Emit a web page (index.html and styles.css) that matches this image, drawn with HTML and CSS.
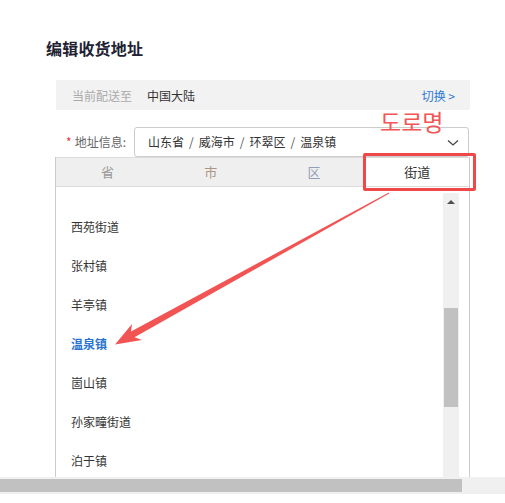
FILE: index.html
```html
<!DOCTYPE html>
<html>
<head>
    <meta charset="utf-8">
    <link rel="stylesheet" href="styles.css">
</head>
<body>
    <div class="viewport">
        <h1 class="title">编辑收货地址</h1>

        <!-- Delivery region bar -->
        <div class="ship-bar">
            <span class="ship-label">当前配送至</span>
            <span class="ship-value">中国大陆</span>
            <a class="ship-switch" href="#">切换 &gt;</a>
        </div>

        <!-- Address picker -->
        <div class="addr-row">
            <label class="addr-label"><span class="star">*</span>地址信息:</label>
            <div class="addr-select">
                <span>山东省</span><span class="sep">/</span><span>威海市</span><span class="sep">/</span><span>环翠区</span><span class="sep">/</span><span>温泉镇</span>
                <svg class="chevron" width="12" height="8" viewBox="0 0 12 8">
                    <polyline points="1,1.5 6,6 11,1.5" fill="none" stroke="#444" stroke-width="1.3"/>
                </svg>
            </div>

            <div class="dropdown">
                <div class="tabs">
                    <div class="tab tab-prov">省</div>
                    <div class="tab tab-city">市</div>
                    <div class="tab tab-dist">区</div>
                    <div class="tab active">街道</div>
                </div>
                <div class="dd-body">
                    <ul class="dd-list">
                        <li>西苑街道</li>
                        <li>张村镇</li>
                        <li>羊亭镇</li>
                        <li class="selected">温泉镇</li>
                        <li>崮山镇</li>
                        <li>孙家疃街道</li>
                        <li>泊于镇</li>
                    </ul>
                    <div class="vscroll">
                        <div class="vscroll-btn"><span class="tri-up"></span></div>
                        <div class="vscroll-thumb"></div>
                    </div>
                </div>
            </div>
        </div>

        <!-- Annotation layer -->
        <div class="note-text">도로명</div>
        <div class="note-box"></div>
        <svg class="note-arrow" width="505" height="477" viewBox="0 0 505 477">
            <polygon points="388.8,192.5 131,331.5 132,324 115,344.5 142,340 134.5,337.3 389.3,193.5" fill="#f25454"/>
        </svg>
    </div>

    <div class="hscroll">
        <div class="hscroll-thumb"></div>
    </div>
</body>
</html>
```

FILE: styles.css
```css
body {
    margin: 0;
    background: #fff;
    font-family: "Noto Sans CJK SC", "Noto Sans", sans-serif;
    color: #333;
}

.viewport {
    position: relative;
    height: 477px;
    overflow: hidden;
}

.title {
    margin: 0;
    padding: 36px 0 0 46px;
    font-size: 16px;
    line-height: 24px;
    font-weight: bold;
    color: #1e2232;
    letter-spacing: 0.2px;
}

.ship-bar {
    display: flex;
    align-items: center;
    margin: 20px 0 0 56px;
    width: 414px;
    height: 30px;
    padding: 0 15px 0 16px;
    box-sizing: border-box;
    background: #f2f2f2;
    font-size: 12px;
}

.ship-label {
    color: #aaa;
    margin-right: 15px;
}

.ship-value {
    color: #333;
}

.ship-switch {
    margin-left: auto;
    color: #2d7ad4;
    text-decoration: none;
}

.addr-row {
    position: relative;
    display: flex;
    margin: 17px 0 0 56px;
    width: 413px;
}

.addr-label {
    width: 78px;
    padding-right: 8px;
    box-sizing: border-box;
    text-align: right;
    font-size: 12px;
    line-height: 30px;
    color: #666;
}

.star {
    color: #e4393c;
    margin-right: 3px;
}

.addr-select {
    position: relative;
    flex: 1;
    height: 30px;
    border: 1px solid #ccc;
    border-radius: 3px;
    box-sizing: border-box;
    padding-left: 13px;
    font-size: 12px;
    line-height: 28px;
    color: #333;
}

.sep {
    margin: 0 5px;
    color: #555;
}

.chevron {
    position: absolute;
    right: 9px;
    top: 11px;
}

/* Cascading region menu */
.dropdown {
    position: absolute;
    left: -1px;
    top: 30px;
    width: 415px;
    background: #fff;
    border: 1px solid #ccc;
    border-top: none;
    box-sizing: border-box;
}

.tabs {
    display: flex;
    height: 30px;
    background: #efefef;
    border-bottom: 1px solid #dcdcdc;
    border-top: 1px solid #dcdcdc;
    box-sizing: border-box;
}

.tab {
    flex: 1;
    text-align: center;
    font-size: 13px;
    line-height: 28px;
    color: #999;
}

.tab-city {
    color: #ad9584;
}

.tab-dist {
    color: #8fa0b8;
}

.tab.active {
    background: #fff;
    color: #333;
}

.dd-body {
    display: flex;
    height: 320px;
}

.dd-list {
    flex: 1;
    list-style: none;
    margin: 0;
    padding: 20px 0 0 15px;
}

.dd-list li {
    font-size: 12px;
    line-height: 39px;
    color: #333;
}

.dd-list li.selected {
    color: #2a74cf;
    font-weight: bold;
}

.vscroll {
    width: 16px;
    margin: 6px 10px 0 0;
    background: #f0f0f0;
}

.vscroll-btn {
    height: 17px;
    display: flex;
    justify-content: center;
    align-items: center;
}

.tri-up {
    width: 0;
    height: 0;
    border-left: 4px solid transparent;
    border-right: 4px solid transparent;
    border-bottom: 4px solid #505050;
}

.vscroll-thumb {
    margin: 98px 1px 0;
    height: 99px;
    background: #c1c1c1;
}

/* Annotations drawn over the page */
.note-text {
    position: absolute;
    left: 380px;
    top: 108px;
    font-family: "Noto Sans CJK KR", sans-serif;
    font-size: 23px;
    line-height: 26px;
    color: #f25656;
}

.note-box {
    position: absolute;
    left: 363px;
    top: 153px;
    width: 113px;
    height: 38px;
    border: 3px solid #f04848;
    border-radius: 2px;
    box-sizing: border-box;
}

.note-arrow {
    position: absolute;
    left: 0;
    top: 0;
    pointer-events: none;
}

.hscroll {
    height: 17px;
    background: #f0f0f0;
    padding-top: 2px;
    box-sizing: border-box;
}

.hscroll-thumb {
    width: 462px;
    height: 13px;
    background: #c1c1c1;
}
```
